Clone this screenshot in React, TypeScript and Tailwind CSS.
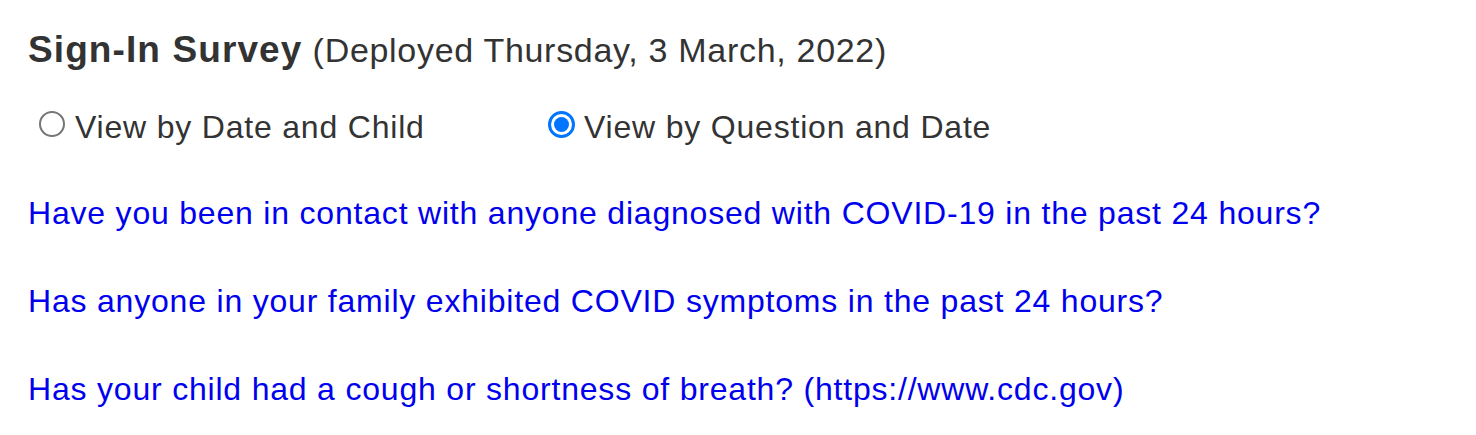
import { useState } from 'react';

const questions = [
  'Have you been in contact with anyone diagnosed with COVID-19 in the past 24 hours?',
  'Has anyone in your family exhibited COVID symptoms in the past 24 hours?',
  'Has your child had a cough or shortness of breath? (https://www.cdc.gov)',
];

function Radio({ checked, label, onClick }: { checked: boolean; label: string; onClick: () => void }) {
  return (
    <label className="flex items-start cursor-pointer" onClick={onClick}>
      <span
        className={
          checked
            ? 'w-[27px] h-[27px] rounded-full border-[3px] border-[#0075ff] flex items-center justify-center mr-[9px]'
            : 'w-[26px] h-[26px] rounded-full border-[2px] border-[#767676] mr-[10px]'
        }
      >
        {checked && <span className="w-[15px] h-[15px] rounded-full bg-[#0075ff]" />}
      </span>
      <span>{label}</span>
    </label>
  );
}

export default function App() {
  const [view, setView] = useState('question');

  return (
    <div className="w-[1476px] h-[435px] bg-white px-[28px] pt-[30px] text-[#333333] font-['Liberation_Sans',Arial,sans-serif]">
      <h1 className="text-[34px] leading-[40px] tracking-[0.7px]">
        <span className="font-bold text-[37px] tracking-[1.1px]">Sign-In Survey</span> (Deployed Thursday, 3 March, 2022)
      </h1>

      <div className="flex items-start mt-[41px] ml-[11px] text-[32px] leading-[32px] tracking-[0.8px]">
        <div className="w-[509px]">
          <Radio checked={view === 'date'} label="View by Date and Child" onClick={() => setView('date')} />
        </div>
        <Radio checked={view === 'question'} label="View by Question and Date" onClick={() => setView('question')} />
      </div>

      <div className="mt-[54px] flex flex-col gap-[56px] text-[32px] leading-[32px] tracking-[0.8px]">
        {questions.map((q) => (
          <a key={q} href="#" className="text-[#0000ee] self-start">
            {q}
          </a>
        ))}
      </div>
    </div>
  );
}
